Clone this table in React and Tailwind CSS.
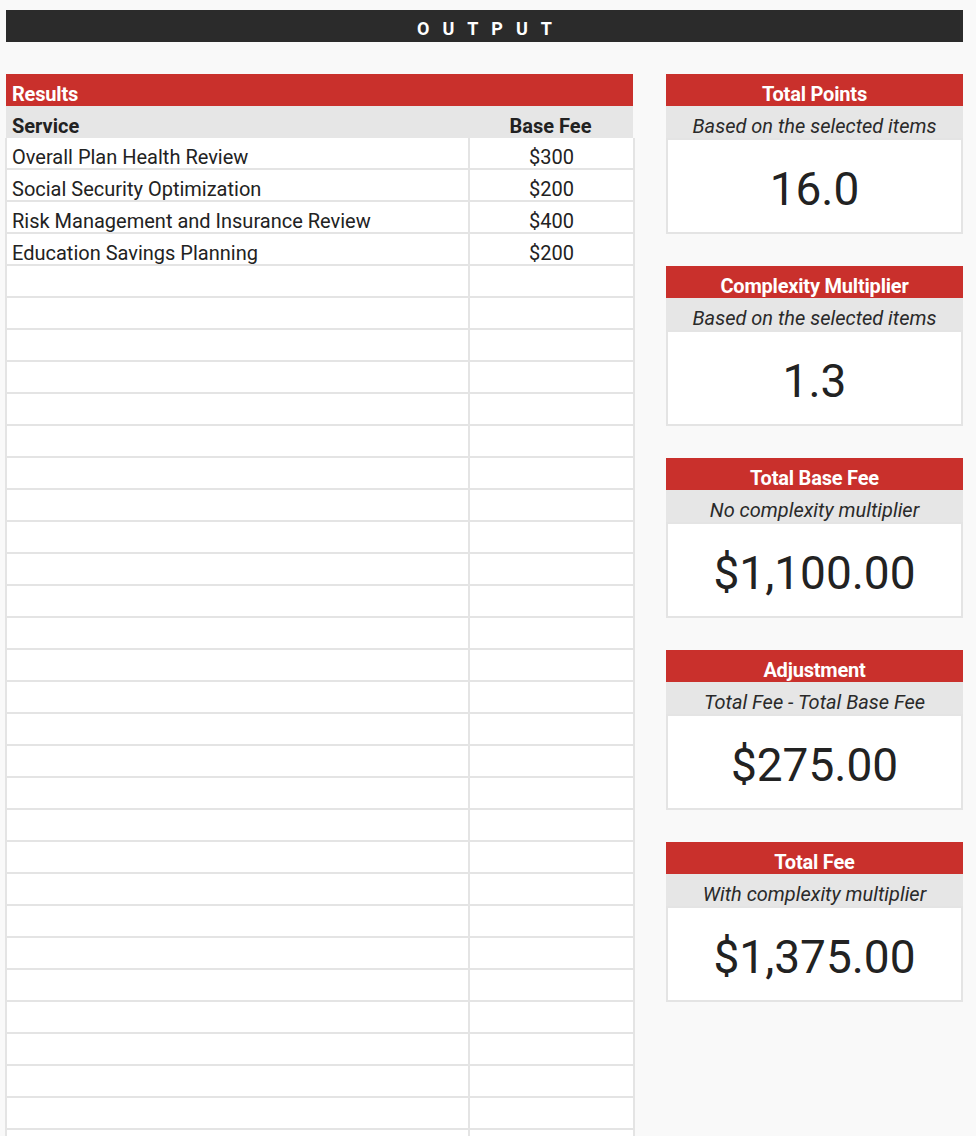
const services = [
  { name: "Overall Plan Health Review", fee: "$300" },
  { name: "Social Security Optimization", fee: "$200" },
  { name: "Risk Management and Insurance Review", fee: "$400" },
  { name: "Education Savings Planning", fee: "$200" },
];

const cards = [
  { title: "Total Points", note: "Based on the selected items", value: "16.0" },
  { title: "Complexity Multiplier", note: "Based on the selected items", value: "1.3" },
  { title: "Total Base Fee", note: "No complexity multiplier", value: "$1,100.00" },
  { title: "Adjustment", note: "Total Fee - Total Base Fee", value: "$275.00" },
  { title: "Total Fee", note: "With complexity multiplier", value: "$1,375.00" },
];

const rows = [...services, ...Array.from({ length: 28 }, () => ({ name: "", fee: "" }))];

const StatCard = ({ title, note, value }) => (
  <div className="flex flex-col">
    <div className="h-8 bg-[#c9302c] text-white font-bold text-[20px] leading-[22px] tracking-[-0.01em] flex items-end justify-center pb-[1px]">
      {title}
    </div>
    <div className="h-8 bg-[#e6e6e6] text-[#2a2a2a] italic text-[20px] leading-[22px] flex items-end justify-center pb-[1px]">
      {note}
    </div>
    <div className="h-24 bg-white border-2 border-[#e4e4e4] flex items-center justify-center text-[46px] text-[#222] pt-[6px]">
      {value}
    </div>
  </div>
);

export default function App() {
  return (
    <div
      className="h-[1136px] overflow-hidden bg-[#f9f9f9] pl-[6px] pr-[13px] pt-[10px]"
      style={{ fontFamily: "Roboto, 'Liberation Sans', sans-serif" }}
    >
      <div className="h-8 bg-[#2b2b2b] flex items-center justify-center pt-[4px] text-white font-bold text-[18px] tracking-[0.72em] pl-[0.72em]">
        OUTPUT
      </div>

      <div className="mt-8 flex gap-[33px]">
        <div className="w-[627px] shrink-0">
          <div className="h-8 bg-[#c9302c] text-white font-bold text-[20px] leading-[22px] tracking-[-0.01em] flex items-end pl-[6px] pb-[1px]">
            Results
          </div>
          <div className="h-8 bg-[#e6e6e6] text-[#222] font-bold text-[20px] leading-[22px] flex items-end pb-[1px]">
            <div className="w-[462px] pl-[6px]">Service</div>
            <div className="flex-1 text-center">Base Fee</div>
          </div>
          <div className="border-l-2 border-r-2 border-[#e4e4e4] -ml-[1px] w-[630px]">
            {rows.map((row, i) => (
              <div
                key={i}
                className="h-8 bg-white border-b-2 border-[#e4e4e4] flex text-[20px] leading-[22px] text-[#222]"
              >
                <div className="w-[463px] border-r-2 border-[#e4e4e4] pl-[5px] flex items-end">
                  {row.name}
                </div>
                <div className="flex-1 flex items-end justify-center">{row.fee}</div>
              </div>
            ))}
          </div>
        </div>

        <div className="w-[297px] flex flex-col gap-8">
          {cards.map((c) => (
            <StatCard key={c.title} {...c} />
          ))}
        </div>
      </div>
    </div>
  );
}
